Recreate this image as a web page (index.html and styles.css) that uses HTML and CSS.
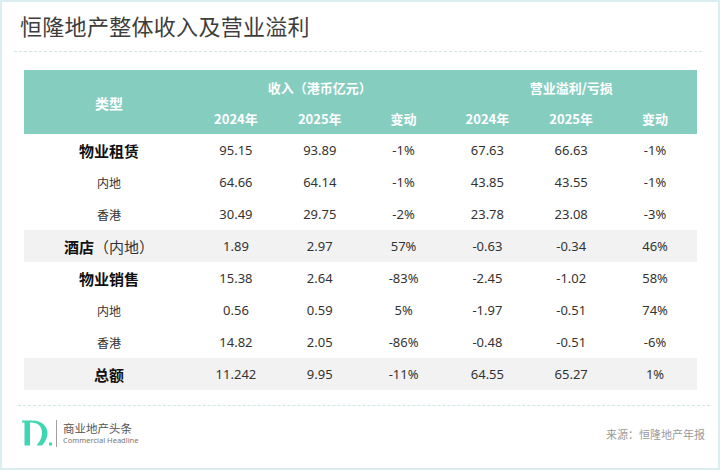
FILE: index.html
```html
<!DOCTYPE html>
<html lang="zh">
<head>
<meta charset="utf-8">
<link rel="stylesheet" href="styles.css">
</head>
<body>
<div class="page">
  <h1 class="title">恒隆地产整体收入及营业溢利</h1>
  <div class="rule rule-top"></div>
  <table class="data">
    <colgroup>
      <col class="c-type">
      <col class="c-num"><col class="c-num"><col class="c-num">
      <col class="c-num"><col class="c-num"><col class="c-num">
    </colgroup>
    <thead>
      <tr class="h1">
        <th rowspan="2" class="type-head">类型</th>
        <th colspan="3">收入（港币亿元）</th>
        <th colspan="3">营业溢利/亏损</th>
      </tr>
      <tr class="h2">
        <th>2024年</th><th>2025年</th><th>变动</th>
        <th>2024年</th><th>2025年</th><th>变动</th>
      </tr>
    </thead>
    <tbody>
      <tr><td class="cat">物业租赁</td><td>95.15</td><td>93.89</td><td>-1%</td><td>67.63</td><td>66.63</td><td>-1%</td></tr>
      <tr><td class="sub">内地</td><td>64.66</td><td>64.14</td><td>-1%</td><td>43.85</td><td>43.55</td><td>-1%</td></tr>
      <tr><td class="sub">香港</td><td>30.49</td><td>29.75</td><td>-2%</td><td>23.78</td><td>23.08</td><td>-3%</td></tr>
      <tr class="shade"><td class="cat"><b>酒店</b><span class="paren">（内地）</span></td><td>1.89</td><td>2.97</td><td>57%</td><td>-0.63</td><td>-0.34</td><td>46%</td></tr>
      <tr><td class="cat">物业销售</td><td>15.38</td><td>2.64</td><td>-83%</td><td>-2.45</td><td>-1.02</td><td>58%</td></tr>
      <tr><td class="sub">内地</td><td>0.56</td><td>0.59</td><td>5%</td><td>-1.97</td><td>-0.51</td><td>74%</td></tr>
      <tr><td class="sub">香港</td><td>14.82</td><td>2.05</td><td>-86%</td><td>-0.48</td><td>-0.51</td><td>-6%</td></tr>
      <tr class="shade"><td class="cat">总额</td><td>11.242</td><td>9.95</td><td>-11%</td><td>64.55</td><td>65.27</td><td>1%</td></tr>
    </tbody>
  </table>
  <div class="rule rule-bottom"></div>
  <div class="footer">
    <div class="brand">
      <svg class="logo" width="32" height="28" viewBox="0 0 32 28" aria-hidden="true">
        <path d="M1 1.5 H11 C21 1.5 26.5 7.5 26.5 14 C26.5 18.5 24.5 22.5 21 26.5 H15.5 C19 22.5 21 18.5 21 14 C21 7.5 17 3.5 10 3.5 H9 V26.5 H3.5 V3.5 H1 Z" fill="#3fd6b2"/>
        <rect x="28" y="23.5" width="3" height="3" fill="#3fd6b2"/>
      </svg>
      <span class="divider"></span>
      <div class="brand-text">
        <div class="brand-cn">商业地产头条</div>
        <div class="brand-en">Commercial Headline</div>
      </div>
    </div>
    <div class="source">来源：恒隆地产年报</div>
  </div>
</div>
</body>
</html>
```
FILE: styles.css
```css
* { box-sizing: border-box; }
html, body { margin: 0; padding: 0; background: #fff; }
body {
  font-family: "Noto Sans", "Noto Sans CJK SC", sans-serif;
  color: #333;
}
.page {
  width: 720px;
  height: 470px;
  border: 2px solid #dbedf0;
  padding: 9px 0 0 0;
  position: relative;
}
.title {
  margin: 0 0 0 18px;
  font-family: "Noto Sans CJK SC", sans-serif;
  font-weight: 400;
  font-size: 22px;
  line-height: 29px;
  color: #3d3d3d;
  letter-spacing: 0.3px;
}
.rule {
  border-top: 1px dashed #cde9e3;
  height: 0;
}
.rule-top { margin: 11px 16px 0 12px; }
.rule-bottom { margin: 15px 8px 0 16px; }

.data {
  margin: 18px 0 0 22px;
  width: 673px;
  border-collapse: collapse;
  table-layout: fixed;
  font-size: 13px;
}
.c-type { width: 170px; }
.c-num { width: 83.8px; }
.data th {
  background: #85cdbf;
  color: #fff;
  font-family: "Noto Sans CJK SC", sans-serif;
  font-weight: 700;
  font-size: 13px;
  padding: 0;
  text-align: center;
}
.data .h1 th { height: 33px; padding-top: 1px; }
.data .h2 th { height: 31px; }
.data th.type-head { font-size: 14px; padding-top: 2px; }
.data td {
  height: 32px;
  padding: 0;
  text-align: center;
  color: #333;
  font-size: 13px;
}
.data td.cat {
  font-family: "Noto Sans CJK SC", sans-serif;
  font-weight: 700;
  font-size: 15px;
  color: #111;
}
.data td.cat b { font-weight: 700; }
.data td.cat .paren { font-weight: 400; color: #333; }
.data td.sub {
  font-family: "Noto Sans CJK SC", sans-serif;
  font-size: 12px;
  color: #333;
}
.data tr.shade td { background: #f2f2f2; }

.footer {
  display: flex;
  justify-content: space-between;
  align-items: center;
  margin: 13px 13px 0 19px;
}
.brand { display: flex; align-items: center; }
.logo { display: block; }
.divider {
  width: 1px;
  height: 27px;
  background: #a0a0a0;
  margin: 0 6px 0 3px;
}
.brand-cn {
  font-family: "Noto Sans CJK SC", sans-serif;
  font-size: 11.5px;
  line-height: 14px;
  color: #555;
}
.brand-en {
  font-family: "Noto Sans", sans-serif;
  font-size: 7.5px;
  line-height: 10px;
  color: #777;
}
.source {
  font-family: "Noto Sans CJK SC", sans-serif;
  font-size: 11px;
  color: #9a9a9a;
  margin-top: 2px;
}
```
